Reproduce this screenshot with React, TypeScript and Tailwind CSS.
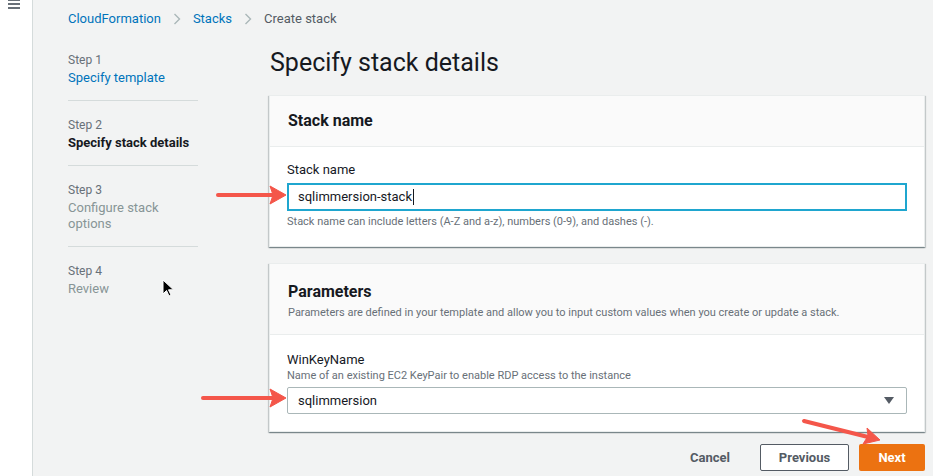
import React from "react";

const Chevron = () => (
  <svg width="8" height="12" viewBox="0 0 8 12" className="mx-[12px]">
    <path d="M1.5 1l5 5-5 5" stroke="#aab7b8" strokeWidth="1.4" fill="none" />
  </svg>
);

interface StepProps {
  num: number;
  title: string;
  state: "done" | "current" | "todo";
  last?: boolean;
}

const Step: React.FC<StepProps> = ({ num, title, state, last }) => {
  const color =
    state === "done"
      ? "text-[#0073bb]"
      : state === "current"
      ? "text-[#16191f] font-bold"
      : "text-[#879596]";
  return (
    <div className={last ? "pt-[16px]" : "pt-[16px] pb-[14px] border-b border-[#d5dbdb]"}>
      <div className="text-[12px] leading-[16px] text-[#687078]">Step {num}</div>
      <div className={`text-[13px] leading-[16px] mt-[2px] ${color}`}>{title}</div>
    </div>
  );
};

const Card: React.FC<{
  title: string;
  desc?: string;
  bodyClass: string;
  children: React.ReactNode;
}> = ({ title, desc, bodyClass, children }) => (
  <div className="bg-white border border-[#eaeded] shadow-[0_1px_1px_0_rgba(0,28,36,0.3),1px_1px_1px_0_rgba(0,28,36,0.15),-1px_1px_1px_0_rgba(0,28,36,0.15)]">
    <div className={`bg-[#fafafa] border-b border-[#eaeded] px-[18px] ${desc ? "pt-[18px] pb-[13px]" : "py-[15px]"}`}>
      <div className="text-[16px] leading-[20px] font-bold text-[#16191f]">{title}</div>
      {desc && <div className="text-[11px] leading-[16px] mt-[3px] text-[#687078]">{desc}</div>}
    </div>
    <div className={`px-[17px] ${bodyClass}`}>{children}</div>
  </div>
);

export default function App() {
  return (
    <div
      className="relative flex h-[476px] w-[933px] overflow-hidden bg-[#f2f3f3]"
      style={{ fontFamily: "Roboto, 'Liberation Sans', sans-serif" }}
    >
      {/* left nav strip */}
      <div className="w-[33px] shrink-0 bg-white border-r border-[#d5dbdb]">
        <div className="ml-[8px] -mt-[1px] flex flex-col gap-[2px]">
          <span className="block h-[2px] w-[12px] bg-[#687078]" />
          <span className="block h-[2px] w-[12px] bg-[#687078]" />
          <span className="block h-[2px] w-[12px] bg-[#687078]" />
        </div>
      </div>

      <div className="flex-1 pl-[35px] pr-[8px]">
        {/* breadcrumb */}
        <div className="flex items-center h-[18px] mt-[10px] text-[13px]">
          <span className="text-[#0073bb]">CloudFormation</span>
          <Chevron />
          <span className="text-[#0073bb]">Stacks</span>
          <Chevron />
          <span className="text-[#545b64]">Create stack</span>
        </div>

        <div className="flex mt-[20px]">
          {/* steps */}
          <nav className="w-[130px] shrink-0 -mt-[12px]">
            <Step num={1} title="Specify template" state="done" />
            <Step num={2} title="Specify stack details" state="current" />
            <Step num={3} title="Configure stack options" state="todo" />
            <Step num={4} title="Review" state="todo" last />
          </nav>

          {/* main */}
          <main className="ml-[71px] w-[656px]">
            <h1 className="text-[25px] leading-[30px] text-[#16191f] ml-[1px]">
              Specify stack details
            </h1>

            <div className="mt-[17px]">
              <Card title="Stack name" bodyClass="pt-[14px] pb-[16px]">
                <label className="block text-[13px] leading-[18px] text-[#16191f] mb-[4px]">
                  Stack name
                </label>
                <div className="h-[28px] w-[620px] border-2 border-[#1fa6cf] flex items-center px-[9px] text-[13px] text-[#16191f]">
                  sqlimmersion-stack
                  <span className="inline-block w-px h-[16px] bg-[#16191f] ml-[1px]" />
                </div>
                <div className="text-[11px] leading-[16px] text-[#687078] mt-[3px]">
                  Stack name can include letters (A-Z and a-z), numbers (0-9), and dashes (-).
                </div>
              </Card>
            </div>

            <div className="mt-[16px]">
              <Card
                title="Parameters"
                desc="Parameters are defined in your template and allow you to input custom values when you create or update a stack."
                bodyClass="pt-[17px] pb-[17px]"
              >
                <div className="text-[13px] leading-[16px] text-[#16191f]">WinKeyName</div>
                <div className="text-[11px] leading-[15px] text-[#687078] mb-[4px]">
                  Name of an existing EC2 KeyPair to enable RDP access to the instance
                </div>
                <div className="h-[27px] w-[620px] border border-[#aab7b8] rounded-[2px] flex items-center justify-between px-[10px] text-[13px] text-[#16191f]">
                  <span>sqlimmersion</span>
                  <svg width="10" height="7" viewBox="0 0 10 7" className="mr-[2px]">
                    <path d="M0 0h10L5 7z" fill="#545b64" />
                  </svg>
                </div>
              </Card>
            </div>

            <div className="flex items-center justify-end mt-[12px] gap-[10px]">
              <button className="h-[27px] px-[20px] text-[13px] font-bold text-[#545b64]">Cancel</button>
              <button className="h-[27px] w-[89px] border border-[#545b64] rounded-[2px] bg-white text-[13px] font-bold text-[#545b64]">
                Previous
              </button>
              <button className="h-[27px] w-[66px] rounded-[2px] bg-[#ec7211] text-[13px] font-bold text-white">
                Next
              </button>
            </div>
          </main>
        </div>
      </div>

      {/* annotation arrows and cursor */}
      <svg className="absolute inset-0 pointer-events-none" width="933" height="476">
        <g fill="#f4564a" stroke="#f4564a">
          <line x1="218" y1="195" x2="275" y2="195" strokeWidth="4" strokeLinecap="round" />
          <path d="M286 195l-16-9 3 9-3 9z" strokeWidth="1" strokeLinejoin="round" />
          <line x1="203" y1="398" x2="275" y2="398" strokeWidth="4" strokeLinecap="round" />
          <path d="M286 398l-16-9 3 9-3 9z" strokeWidth="1" strokeLinejoin="round" />
          <line x1="804" y1="421" x2="868" y2="437" strokeWidth="4" strokeLinecap="round" />
          <path d="M880 440l-13-12 1 8-5 8z" strokeWidth="1" strokeLinejoin="round" />
        </g>
        <path
          d="M163 280v14l3.5-3.5 2.5 5.5 2-1-2.5-5.2h5z"
          fill="#000"
          stroke="#fff"
          strokeWidth="1"
        />
      </svg>
    </div>
  );
}
